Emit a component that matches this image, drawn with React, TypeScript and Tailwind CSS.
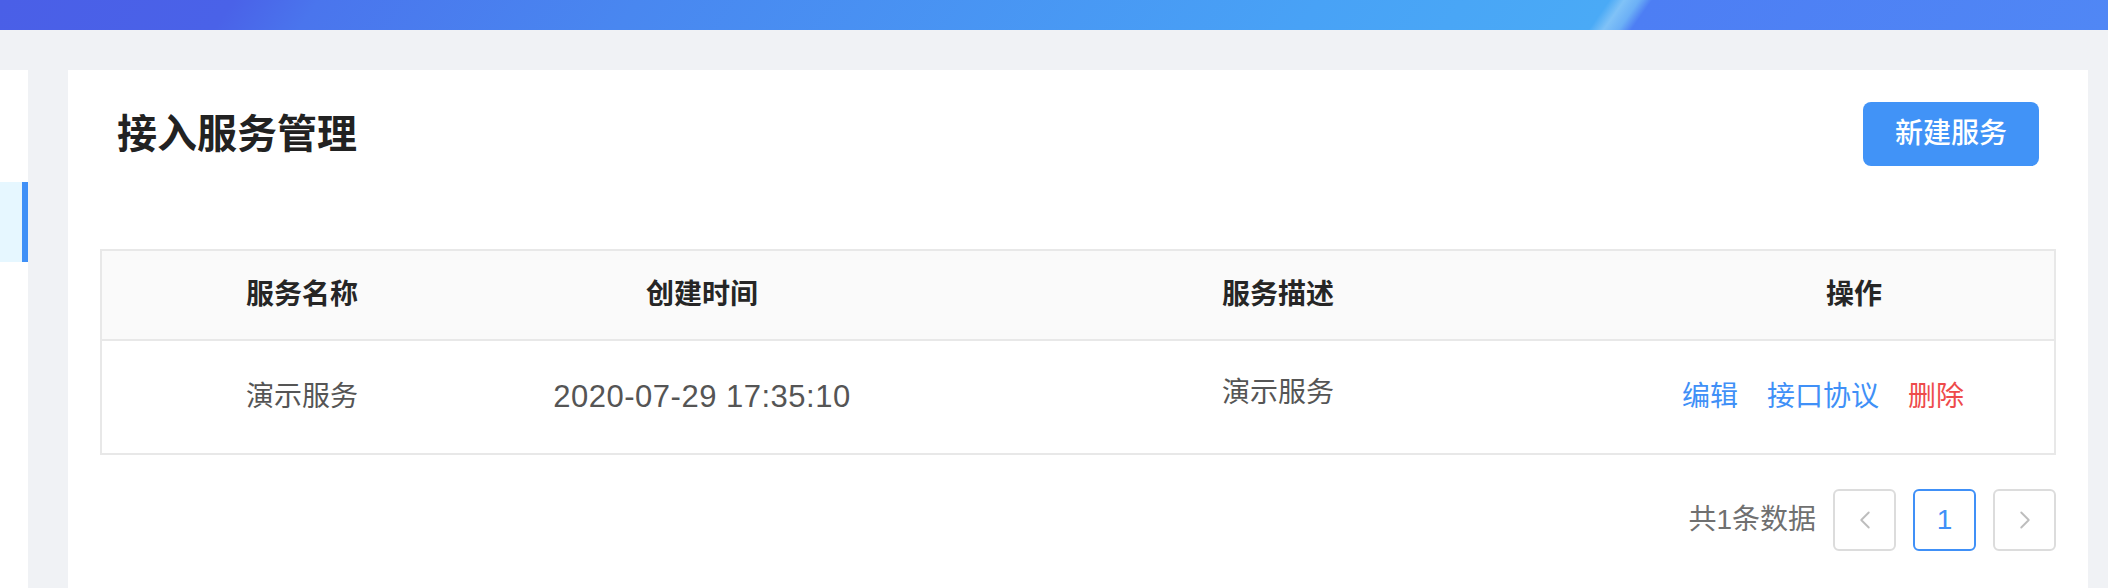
import { ChevronLeft, ChevronRight } from 'lucide-react'

interface Service {
  name: string
  createdAt: string
  description: string
}

const services: Service[] = [
  { name: '演示服务', createdAt: '2020-07-29 17:35:10', description: '演示服务' },
]

function Pager({ total }: { total: number }) {
  return (
    <div className="mt-[34px] flex items-center justify-end gap-[17px]">
      <span className="text-[28px] text-[#707070]">共{total}条数据</span>
      <button className="flex h-[62px] w-[63px] items-center justify-center rounded-[6px] border-2 border-[#dcdcdc] text-[#bdbdbd]">
        <ChevronLeft size={30} strokeWidth={1.5} />
      </button>
      <button className="flex h-[62px] w-[63px] items-center justify-center rounded-[6px] border-2 border-[#4090f7] text-[28px] text-[#4090f7]">
        1
      </button>
      <button className="flex h-[62px] w-[63px] items-center justify-center rounded-[6px] border-2 border-[#dcdcdc] text-[#bdbdbd]">
        <ChevronRight size={30} strokeWidth={1.5} />
      </button>
    </div>
  )
}

export default function App() {
  return (
    <div className="h-[588px] w-full overflow-hidden bg-[#f0f2f5] font-['Liberation_Sans','Noto_Sans_CJK_SC',sans-serif]">
      {/* Top banner */}
      <div className="h-[30px] bg-[linear-gradient(125deg,#4a5fe7_0%,#4a62e8_11%,#4a75ed_15%,#4987f0_30%,#48a2f6_62%,#4aaaf6_75.6%,#80c2f7_76.3%,#6cb0f6_77%,#4d7ef4_77.6%,#5087f5_100%)]" />

      <div className="flex h-[558px] pt-[40px]">
        {/* Side menu */}
        <aside className="w-[28px] shrink-0 bg-white pt-[112px]">
          <div className="h-[80px] border-r-[6px] border-[#4090f7] bg-[#e6f7ff]" />
        </aside>

        {/* Content card */}
        <main className="ml-[40px] mr-[20px] flex-1 bg-white px-[32px] pt-[32px]">
          <div className="flex items-center justify-between px-[17px]">
            <h1 className="text-[40px] font-bold text-[#222]">接入服务管理</h1>
            <button className="h-[64px] w-[176px] rounded-[8px] bg-[#4193f7] text-[28px] font-medium text-white">
              新建服务
            </button>
          </div>

          <div className="mt-[83px] border-2 border-[#e8e8e8]">
            <div className="grid h-[90px] grid-cols-[400px_400px_1fr_400px] items-center border-b-2 border-[#e8e8e8] bg-[#fafafa] text-center text-[28px] font-semibold text-[#262626]">
              <div>服务名称</div>
              <div>创建时间</div>
              <div>服务描述</div>
              <div>操作</div>
            </div>
            {services.map(s => (
              <div key={s.name} className="grid h-[112px] grid-cols-[400px_400px_1fr_400px] items-center text-center text-[28px] text-[#555]">
                <div>{s.name}</div>
                <div className="text-[31px] tracking-[0.5px]">{s.createdAt}</div>
                <div className="-mt-[8px]">{s.description}</div>
                <div className="flex gap-[29px] pl-[28px]">
                  <a className="text-[#4090f7]">编辑</a>
                  <a className="text-[#4090f7]">接口协议</a>
                  <a className="text-[#ee4b4b]">删除</a>
                </div>
              </div>
            ))}
          </div>

          <Pager total={services.length} />
        </main>
      </div>
    </div>
  )
}
